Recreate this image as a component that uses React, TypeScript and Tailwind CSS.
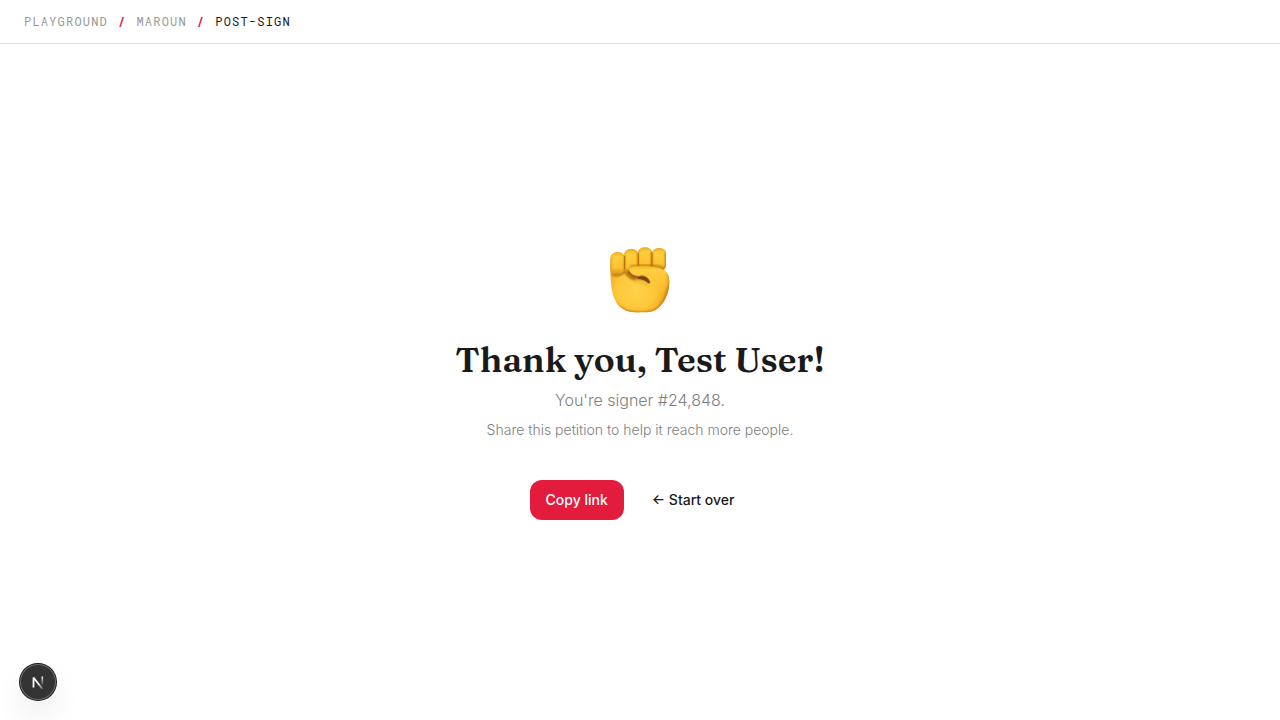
/**
 * App.tsx
 *
 * Post-sign screen of the petition playground: a breadcrumb bar on top, then
 * a centered thank-you message with the share and restart actions.
 */

import { Fragment } from 'react';

const CRUMBS = ['Playground', 'Maroun'];

interface ThankYouProps {
  name: string;
  signer: number;
}

function Breadcrumb() {
  return (
    <header className="border-b border-[#e0e0e0] px-6 pt-[13px] pb-[14px]">
      <nav
        aria-label="Breadcrumb"
        className="flex items-center gap-[10px] font-['Roboto_Mono','Liberation_Mono',monospace] text-xs uppercase tracking-widest"
      >
        {CRUMBS.map((crumb) => (
          <Fragment key={crumb}>
            <a href="#" className="text-[#999999]">{crumb}</a>
            <span className="font-bold text-[#e31b3d]">/</span>
          </Fragment>
        ))}
        <span className="text-[#1a1a1a]">Post-sign</span>
      </nav>
    </header>
  );
}

// Raised fist: palm first, then the four fingers, then the thumb folded over them.
function Fist() {
  return (
    <svg viewBox="27 27 216 216" className="size-[72px]" role="img" aria-label="Raised fist">
      <defs>
        <radialGradient id="palm" gradientUnits="userSpaceOnUse" cx="122" cy="165" r="106">
          <stop offset="0" stopColor="#ffd24a" />
          <stop offset="0.55" stopColor="#fec73a" />
          <stop offset="0.8" stopColor="#f3b026" />
          <stop offset="1" stopColor="#cf8314" />
        </radialGradient>
        <linearGradient id="finger" x1="0" y1="0" x2="0" y2="1">
          <stop offset="0" stopColor="#e9a91f" />
          <stop offset="0.2" stopColor="#ffcd3c" />
          <stop offset="0.7" stopColor="#fdc331" />
          <stop offset="1" stopColor="#dd9418" />
        </linearGradient>
        <linearGradient id="fingerSide" x1="0" y1="0" x2="1" y2="0">
          <stop offset="0" stopColor="#c67c0c" stopOpacity="0.6" />
          <stop offset="0.2" stopColor="#e9a51c" stopOpacity="0" />
          <stop offset="0.78" stopColor="#e9a51c" stopOpacity="0" />
          <stop offset="1" stopColor="#a86209" stopOpacity="0.7" />
        </linearGradient>
        <linearGradient id="thumb" gradientUnits="userSpaceOnUse" x1="150" y1="90" x2="150" y2="175">
          <stop offset="0" stopColor="#f0ae20" />
          <stop offset="0.18" stopColor="#ffcf42" />
          <stop offset="0.5" stopColor="#fec638" />
          <stop offset="0.75" stopColor="#fec638" stopOpacity="0.6" />
          <stop offset="1" stopColor="#fec638" stopOpacity="0" />
        </linearGradient>
        <filter id="soft" x="-30%" y="-30%" width="160%" height="160%">
          <feGaussianBlur stdDeviation="3" />
        </filter>
        <clipPath id="hand">
          <path d="M46 92 C46 165 54 202 84 222 C98 232 120 233 145 232 C172 232 184 226 196 213 C213 194 223 167 223 140 C223 123 216 111 204 104 L204 88 L60 88 Z" />
        </clipPath>
      </defs>

      <path d="M46 92 C46 165 54 202 84 222 C98 232 120 233 145 232 C172 232 184 226 196 213 C213 194 223 167 223 140 C223 123 216 111 204 104 L204 88 L60 88 Z" fill="url(#palm)" />
      <g clipPath="url(#hand)">
        <path d="M60 205 C86 238 128 234 148 234 C174 234 187 227 199 213 C215 193 226 167 226 138" fill="none" stroke="#b9650f" strokeWidth="9" opacity="0.75" filter="url(#soft)" />
        <path d="M50 117 C64 125 83 118 91 107 C96 121 106 131 122 134" fill="none" stroke="#ad650b" strokeWidth="6" filter="url(#soft)" />
      </g>

      {/* Fill behind the knuckles so no gap shows between the rounded fingers */}
      <path d="M58 72 L205 58 L205 112 L90 112 Z" fill="#c5800f" />
      <rect x="171" y="39" width="42" height="68" rx="17" fill="url(#finger)" />
      <rect x="171" y="39" width="42" height="68" rx="17" fill="url(#fingerSide)" />
      <rect x="129" y="37" width="42" height="68" rx="17" fill="url(#finger)" />
      <rect x="129" y="37" width="42" height="68" rx="17" fill="url(#fingerSide)" />
      <rect x="88" y="42" width="42" height="76" rx="17" fill="url(#finger)" />
      <rect x="88" y="42" width="42" height="76" rx="17" fill="url(#fingerSide)" />
      <rect x="46" y="51" width="44" height="66" rx="20" fill="url(#finger)" />
      <rect x="46" y="51" width="44" height="66" rx="20" fill="url(#fingerSide)" />
      <path d="M130 56 V90 M171 54 V90 M89 64 V102" fill="none" stroke="#a96208" strokeWidth="3" strokeLinecap="round" opacity="0.8" />
      <path d="M104 97 C115 90 145 90 172 91 C190 93 202 97 210 102" fill="none" stroke="#ad650b" strokeWidth="5" opacity="0.75" filter="url(#soft)" />

      {/* Hollow between the thumb and the palm */}
      <path d="M93 104 C97 119 108 130 125 133 C142 134 155 138 163 146 C168 135 160 122 145 117 L105 108 Z" fill="#a05d0a" filter="url(#soft)" />
      <path d="M103 106 C103 97 113 94 130 94 C158 92 193 96 207 106 C219 114 223 127 223 140 C222 153 219 165 214 175 L166 175 C170 162 168 148 165 140 C160 126 144 119 132 124 C117 123 103 116 103 106 Z" fill="url(#thumb)" />
      <path d="M104 110 C108 120 120 125 132 124 C147 119 161 127 164 142" fill="none" stroke="#b06a0e" strokeWidth="3" opacity="0.7" />
      <path d="M128 127 C145 120 160 127 164 141 C166 147 160 146 155 140 C148 134 140 132 128 131 Z" fill="#7a4406" />
      <path d="M118 138 C136 139 148 144 158 152" fill="none" stroke="#f0ae28" strokeWidth="6" opacity="0.8" filter="url(#soft)" />
      <g clipPath="url(#hand)">
        <path d="M219 115 C229 142 217 188 198 211" fill="none" stroke="#cf8213" strokeWidth="9" opacity="0.65" filter="url(#soft)" />
      </g>
    </svg>
  );
}

function ThankYou({ name, signer }: ThankYouProps) {
  return (
    <main className="flex flex-1 flex-col items-center justify-center px-6 text-center">
      <Fist />
      <h1 className="mt-6 font-['Fraunces','Liberation_Serif',serif] text-[35px] leading-10 font-semibold text-[#1a1a1a]">
        Thank you, {name}!
      </h1>
      <p className="mt-2 text-base font-light text-[#808080]">You're signer #{signer.toLocaleString('en-US')}.</p>
      <p className="mt-2 text-sm font-light text-[#808080]">Share this petition to help it reach more people.</p>
      <div className="mt-10 flex gap-3">
        <button type="button" className="h-10 rounded-xl bg-[#e31b3d] px-4 text-sm font-medium text-white">
          Copy link
        </button>
        <button type="button" className="h-10 rounded-xl px-4 text-sm font-medium text-[#1a1a1a]">
          ← Start over
        </button>
      </div>
    </main>
  );
}

// Round dev-tools badge pinned to the bottom-left corner.
function DevBadge() {
  return (
    <button
      type="button"
      aria-label="Open dev tools"
      className="fixed bottom-5 left-5 flex size-9 items-center justify-center rounded-full bg-[#333333] shadow-[0_0_0_1px_#171717,inset_0_0_0_1px_#6b6b6b,0_16px_32px_-8px_rgba(0,0,0,0.24)]"
    >
      <svg viewBox="0 0 14 14" className="size-[14px]" fill="none">
        <defs>
          <linearGradient id="diag" gradientUnits="userSpaceOnUse" x1="8" y1="8" x2="13" y2="15">
            <stop stopColor="#fff" />
            <stop offset="1" stopColor="#fff" stopOpacity="0" />
          </linearGradient>
          <linearGradient id="stem" gradientUnits="userSpaceOnUse" x1="11" y1="1" x2="11" y2="11">
            <stop stopColor="#fff" />
            <stop offset="1" stopColor="#fff" stopOpacity="0" />
          </linearGradient>
        </defs>
        <path d="M2.5 12.5 V2.5 L11.5 14" stroke="url(#diag)" strokeWidth="1.8" strokeLinejoin="bevel" />
        <path d="M11.3 1.5 V10" stroke="url(#stem)" strokeWidth="1.6" />
      </svg>
    </button>
  );
}

export default function App() {
  return (
    <div className="flex min-h-screen flex-col bg-white font-['Inter',sans-serif]">
      <Breadcrumb />
      <ThankYou name="Test User" signer={24848} />
      <DevBadge />
    </div>
  );
}
